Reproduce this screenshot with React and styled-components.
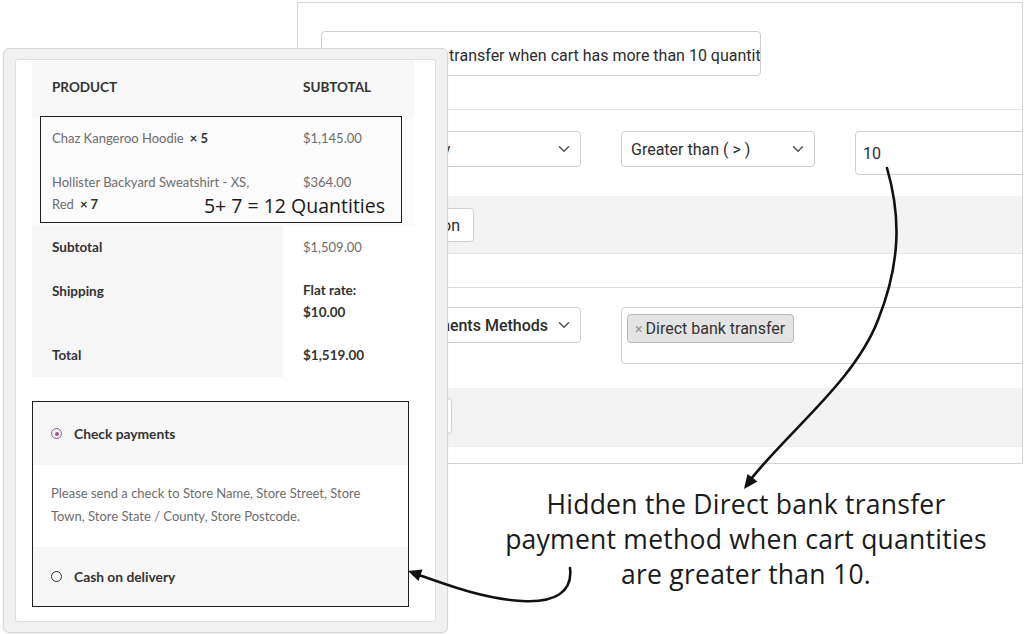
import React from "react";
import styled, { createGlobalStyle } from "styled-components";

const Global = createGlobalStyle`
  html, body { margin: 0; padding: 0; background: #fff; }
  #root { width: 1024px; height: 634px; }
  * { box-sizing: border-box; }
`;

const Canvas = styled.div`
  position: relative;
  width: 1024px;
  height: 634px;
  overflow: hidden;
  background: #fff;
`;

/* ---------- back window: rule editor ---------- */
const AdminWindow = styled.section`
  position: absolute;
  left: 297px;
  top: 2px;
  width: 726px;
  height: 462px;
  border: 1px solid #d4d4d4;
  background: #fff;
  display: flex;
  flex-direction: column;
  overflow: hidden;
  font-family: Roboto, "Liberation Sans", sans-serif;
  font-size: 16px;
  color: #2c2c2c;
  z-index: 1;
`;

const AdminRow = styled.div`
  flex: ${(p) => (p.$h ? `0 0 ${p.$h}px` : "1 1 auto")};
  display: flex;
  align-items: flex-start;
  gap: 40px;
  padding: ${(p) => p.$pt || 0}px 0 0 23px;
  background: ${(p) => p.$bg || "#fff"};
  border-bottom: ${(p) => (p.$line ? `1px solid ${p.$line}` : "none")};
`;

const TextField = styled.div`
  width: 440px;
  height: 45px;
  border: 1px solid #cfcfcf;
  border-radius: 4px;
  background: #fff;
  display: flex;
  align-items: center;
  padding: 4px 6px 0 6px;
  white-space: nowrap;
  overflow: hidden;
`;

const SelectBox = styled.div`
  width: ${(p) => p.$w}px;
  height: 36px;
  flex: 0 0 auto;
  border: 1px solid #cfcfcf;
  border-radius: 4px;
  background: #fff;
  display: flex;
  align-items: center;
  justify-content: ${(p) => (p.$end ? "flex-end" : "space-between")};
  gap: 10px;
  padding: 0 10px 0 9px;
  white-space: nowrap;
  overflow: hidden;
  font-weight: ${(p) => (p.$strong ? 500 : 400)};
`;

const NumberField = styled.div`
  width: 220px;
  height: 44px;
  flex: 0 0 auto;
  border: 1px solid #cfcfcf;
  border-radius: 4px;
  background: #fff;
  display: flex;
  align-items: center;
  padding: 0 7px;
`;

const MultiSelect = styled.div`
  width: 420px;
  height: 57px;
  flex: 0 0 auto;
  border: 1px solid #cfcfcf;
  border-radius: 4px;
  background: #fff;
  padding: 6px 5px;
  display: flex;
  align-items: flex-start;
`;

const Tag = styled.span`
  height: 29px;
  display: inline-flex;
  align-items: center;
  gap: 3px;
  padding: 0 8px 0 7px;
  background: #e4e4e4;
  border: 1px solid #b9b9b9;
  border-radius: 4px;
  color: #333;
`;

const TagX = styled.span`
  color: #999;
  font-size: 14px;
`;

const GhostButton = styled.div`
  width: ${(p) => p.$w}px;
  height: ${(p) => p.$h || 34}px;
  border: 1px solid #cfcfcf;
  border-radius: 4px;
  background: #fff;
  display: flex;
  align-items: center;
  justify-content: flex-end;
  padding-right: 13px;
  white-space: nowrap;
  overflow: hidden;
`;

const Chevron = () => (
  <svg width="12" height="8" viewBox="0 0 12 8" aria-hidden="true">
    <path d="M1.5 1.8 L6 6.2 L10.5 1.8" fill="none" stroke="#555" strokeWidth="1.6" strokeLinecap="round" strokeLinejoin="round" />
  </svg>
);

/* ---------- front window: checkout ---------- */
const CheckoutWindow = styled.section`
  position: absolute;
  left: 3px;
  top: 48px;
  width: 445px;
  height: 585px;
  padding: 10px 11px;
  background: #f1f1f1;
  border: 1px solid #d6d6d6;
  border-radius: 6px;
  box-shadow: 0 1px 2px rgba(0, 0, 0, 0.06);
  z-index: 2;
`;

const CheckoutInner = styled.div`
  position: relative;
  height: 100%;
  background: #fff;
  border: 1px solid #dedede;
  border-radius: 3px;
  padding: 0 20px 0 16px;
  font-family: Lato, "Noto Sans", sans-serif;
  font-size: 13px;
  color: #6d6d6d;
`;

const OrderTable = styled.div`
  width: 382px;
  display: flex;
  flex-direction: column;
`;

const TRow = styled.div`
  display: grid;
  grid-template-columns: 251px 131px;
  height: ${(p) => p.$h}px;
`;

const Cell = styled.div`
  background: ${(p) => p.$bg || "transparent"};
  padding: ${(p) => (p.$center ? "0 20px 4px" : `${p.$pt ?? 10}px 20px 0`)};
  display: ${(p) => (p.$center ? "flex" : "block")};
  align-items: center;
  line-height: 22px;
  font-size: ${(p) => (p.$bold ? "13.5px" : "13px")};
  font-weight: ${(p) => (p.$bold ? 700 : 400)};
  color: ${(p) => (p.$bold ? "#333" : "#6d6d6d")};
  text-transform: ${(p) => (p.$caps ? "uppercase" : "none")};
`;

const Qty = styled.strong`
  color: #333;
  margin-left: 6px;
  font-weight: 700;
`;

const PaymentBox = styled.div`
  margin-top: 24px;
  width: 377px;
  height: 206px;
  border: 1.5px solid #1e1e1e;
  display: flex;
  flex-direction: column;
`;

const MethodRow = styled.div`
  flex: 0 0 ${(p) => p.$h}px;
  background: #f7f7f7;
  display: flex;
  align-items: center;
  gap: 12px;
  padding-left: 18px;
  font-size: 13.8px;
  font-weight: 700;
  color: #333;
`;

const MethodDesc = styled.div`
  flex: 1 1 auto;
  background: #fff;
  padding: 17px 18px 0 18px;
  line-height: 23px;
  color: #6d6d6d;
`;

const Radio = styled.span`
  width: 11px;
  height: 11px;
  border-radius: 50%;
  border: 1.5px solid ${(p) => (p.$on ? "#96588a" : "#333")};
  display: inline-flex;
  align-items: center;
  justify-content: center;
  &::after {
    content: "";
    width: 4px;
    height: 4px;
    border-radius: 50%;
    background: ${(p) => (p.$on ? "#96588a" : "transparent")};
  }
`;

const Highlight = styled.div`
  position: absolute;
  left: 24px;
  top: 56px;
  width: 362px;
  height: 107px;
  border: 1.5px solid #1e1e1e;
  display: flex;
  align-items: flex-end;
  justify-content: flex-end;
  padding: 0 16px 5px 0;
  pointer-events: none;
`;

const NoteText = styled.span`
  font-family: "Open Sans", "Noto Sans", sans-serif;
  font-size: 19.5px;
  line-height: 22px;
  color: #1a1a1a;
`;

const Caption = styled.p`
  position: absolute;
  left: 396px;
  top: 487px;
  width: 700px;
  margin: 0;
  text-align: center;
  font-family: "Open Sans", "Noto Sans", sans-serif;
  font-size: 26.5px;
  letter-spacing: 0.25px;
  line-height: 35px;
  color: #1a1a1a;
  z-index: 3;
`;

const ArrowLayer = styled.svg`
  position: absolute;
  left: 0;
  top: 0;
  width: 1024px;
  height: 634px;
  pointer-events: none;
  z-index: 4;
`;

export default function App() {
  return (
    <Canvas>
      <Global />

      <AdminWindow>
        <AdminRow $h={107} $pt={28} $line="#e6e6e6">
          <TextField>Hide Direct bank transfer when cart has more than 10 quantities</TextField>
        </AdminRow>
        <AdminRow $h={86} $pt={21}>
          <SelectBox $w={260}>
            <span>Product Quantity</span>
            <Chevron />
          </SelectBox>
          <SelectBox $w={194}>
            <span>Greater than ( &gt; )</span>
            <Chevron />
          </SelectBox>
          <NumberField>10</NumberField>
        </AdminRow>
        <AdminRow $h={58} $pt={12} $bg="#f3f3f3" $line="#e6e6e6">
          <GhostButton $w={153}>Add Condition</GhostButton>
        </AdminRow>
        <AdminRow $h={34} $line="#dcdcdc" />
        <AdminRow $h={100} $pt={19}>
          <SelectBox $w={260} $end $strong>
            <span>Payments Methods</span>
            <Chevron />
          </SelectBox>
          <MultiSelect>
            <Tag>
              <TagX>×</TagX>Direct bank transfer
            </Tag>
          </MultiSelect>
        </AdminRow>
        <AdminRow $h={59} $pt={10} $bg="#f3f3f3" $line="#ececec">
          <GhostButton $w={131} $h={36}>Save Rule</GhostButton>
        </AdminRow>
        <AdminRow />
      </AdminWindow>

      <CheckoutWindow>
        <CheckoutInner>
          <OrderTable>
            <TRow $h={58}>
              <Cell $bg="#f8f8f8" $center $bold $caps>Product</Cell>
              <Cell $bg="#f8f8f8" $center $bold $caps>Subtotal</Cell>
            </TRow>
            <TRow $h={42}>
              <Cell $bg="#fbfbfb" $pt={9}>
                Chaz Kangeroo Hoodie<Qty>× 5</Qty>
              </Cell>
              <Cell $bg="#fbfbfb" $pt={9}>$1,145.00</Cell>
            </TRow>
            <TRow $h={66}>
              <Cell $bg="#fbfbfb" $pt={11}>
                Hollister Backyard Sweatshirt - XS, Red<Qty>× 7</Qty>
              </Cell>
              <Cell $bg="#fbfbfb" $pt={11}>$364.00</Cell>
            </TRow>
            <TRow $h={42}>
              <Cell $bg="#f6f6f6" $bold $pt={10}>Subtotal</Cell>
              <Cell $pt={10}>$1,509.00</Cell>
            </TRow>
            <TRow $h={67}>
              <Cell $bg="#f6f6f6" $bold $pt={12}>Shipping</Cell>
              <Cell $bold $pt={11}>
                Flat rate:
                <br />
                $10.00
              </Cell>
            </TRow>
            <TRow $h={42}>
              <Cell $bg="#f6f6f6" $bold $pt={9}>Total</Cell>
              <Cell $bold $pt={9}>$1,519.00</Cell>
            </TRow>
          </OrderTable>

          <PaymentBox>
            <MethodRow $h={63}>
              <Radio $on />
              Check payments
            </MethodRow>
            <MethodDesc>
              Please send a check to Store Name, Store Street, Store Town, Store State / County, Store Postcode.
            </MethodDesc>
            <MethodRow $h={59}>
              <Radio />
              Cash on delivery
            </MethodRow>
          </PaymentBox>

          <Highlight>
            <NoteText>5+ 7 = 12 Quantities</NoteText>
          </Highlight>
        </CheckoutInner>
      </CheckoutWindow>

      <Caption>
        Hidden the Direct bank transfer
        <br />
        payment method when cart quantities
        <br />
        are greater than 10.
      </Caption>

      <ArrowLayer viewBox="0 0 1024 634">
        <path
          d="M887 168 C900 213, 902 260, 878 320 C855 380, 790 430, 751 479"
          fill="none"
          stroke="#111"
          strokeWidth="2.6"
          strokeLinecap="round"
        />
        <polygon points="744,489 757.5,481.5 747.5,474" fill="#111" />
        <path
          d="M570 568 C573 592, 555 603, 522 601 C485 599, 450 586, 419 575"
          fill="none"
          stroke="#111"
          strokeWidth="2.6"
          strokeLinecap="round"
        />
        <polygon points="408,571 422.5,569.5 418.5,581" fill="#111" />
      </ArrowLayer>
    </Canvas>
  );
}
